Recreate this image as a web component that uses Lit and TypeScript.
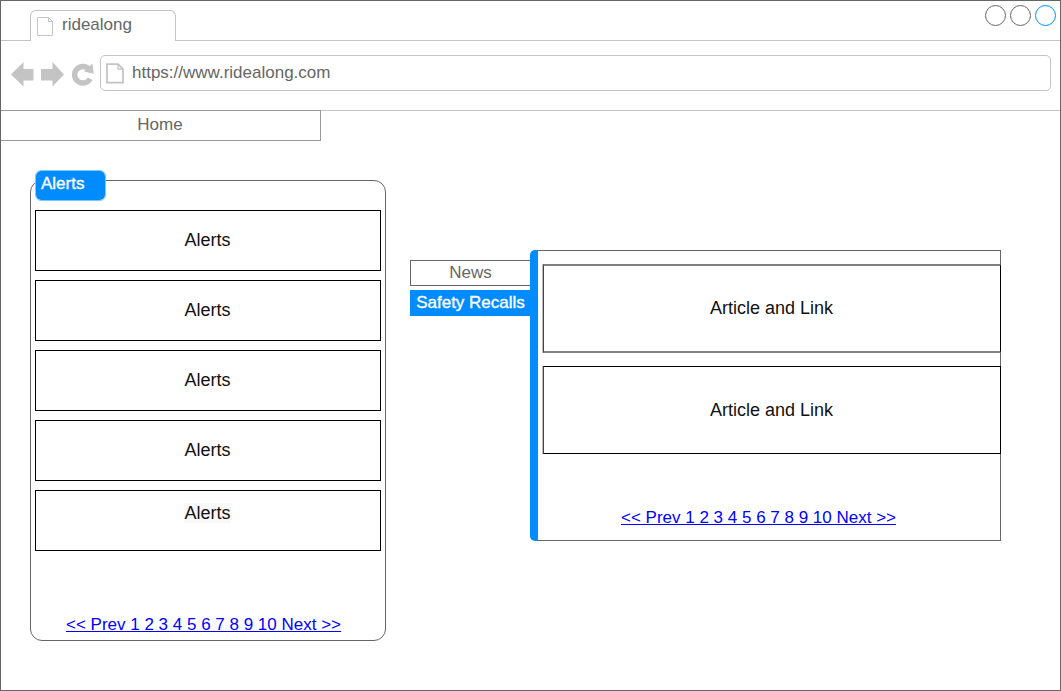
import { LitElement, html, css, svg } from "lit";
import { customElement, property } from "lit/decorators.js";

@customElement("page-links")
class PageLinks extends LitElement {
  static styles = css`
    :host { display: block; font-size: 17px; line-height: 20px; white-space: nowrap; }
    a { color: #0000ff; text-decoration: underline; text-decoration-thickness: 1px; text-underline-offset: 1px; text-decoration-skip-ink: none; }
  `;
  render() {
    return html`<a>&lt;&lt; Prev 1 2 3 4 5 6 7 8 9 10 Next &gt;&gt;</a>`;
  }
}

@customElement("browser-chrome")
class BrowserChrome extends LitElement {
  @property() name = "";
  @property() address = "";
  static styles = css`
    :host { display: block; color: #666; font-size: 17px; line-height: 20px; }
    svg { display: block; flex: none; }
    .tabs { display: flex; height: 40px; box-sizing: border-box; padding-top: 9px; border-bottom: 1px solid #c4c4c4; }
    .tab { box-sizing: border-box; width: 146px; height: 31px; margin-left: 29px; padding: 5px 0 0 6px; display: flex; background: #fff; border: 1px solid #c4c4c4; border-bottom: 0; border-radius: 6px 6px 0 0; }
    .tab span { margin: -1px 0 0 8px; }
    .controls { margin: -6px 3px 0 auto; }
    .bar { display: flex; height: 70px; box-sizing: border-box; padding: 14px 9px 0 10px; border-bottom: 1px solid #c4c4c4; }
    .url { box-sizing: border-box; flex: 1; height: 36px; display: flex; border: 1px solid #c4c4c4; border-radius: 5px; padding: 7px 0 0 5px; }
    .url span { margin-left: 8px; }
    .nav { margin-right: 4px; }
  `;
  render() {
    return html`
      <div class="tabs">
        <div class="tab">
          <svg width="17" height="20" fill="none" stroke="#c4c4c4"><path d="M.5 1.5H11.5L15.5 5.5V19.5H.5ZM11.5 1.5V5.5H15.5" /></svg>
          <span>${this.name}</span>
        </div>
        <svg class="controls" width="73" height="24" fill="none" stroke="#666">
          ${[["#666", 11.5], ["#666", 36.5], ["#008cff", 61.5]].map(([c, x]) => svg`<circle cx=${x} cy="11.5" r="10" stroke=${c} />`)}
        </svg>
      </div>
      <div class="bar">
        <svg class="nav" width="85" height="36" fill="#c4c4c4">
          <path d="M0 19.5L12.5 7V14H22.5V25.5H12.5V31.5ZM53 19.5L41.5 7V14H30V25.5H41.5V31.5Z" />
          <path d="M78.7 15A8.3 8.3 0 1 0 79.2 23.7" fill="none" stroke="#c4c4c4" stroke-width="5.4" />
          <path d="M81.4 8.6L82.8 18.8L73 16.6Z" />
        </svg>
        <div class="url">
          <svg width="18" height="22" fill="none" stroke="#c4c4c4" stroke-width="1.8"><path d="M1 1.2H12L17 6.2V19.7H1Z" /><path d="M12 1.2V6.2H17" stroke-width="1.2" /></svg>
          <span>${this.address}</span>
        </div>
      </div>
    `;
  }
}

@customElement("app-root")
class AppRoot extends LitElement {
  static styles = css`
    :host { display: block; }
    * { box-sizing: border-box; }
    .window { width: 1061px; height: 691px; border: 1px solid #666; background: #fff; font-family: "Liberation Sans", Arial, sans-serif; font-size: 17px; line-height: 20px; color: #666; overflow: hidden; }
    .home { width: 321px; height: 31px; margin: -1px 0 0 -1px; border: 1px solid #999; text-align: center; padding: 4px 1px 0 0; }
    .content { display: flex; align-items: flex-start; }
    .alerts { width: 356px; height: 461px; margin: 39px 0 0 29px; border: 1px solid #666; border-radius: 12px; padding: 0 4px; }
    .badge { width: 71px; height: 31px; margin-top: -11px; padding: 3px 5px 0; background: #008cff; background-clip: padding-box; border: 1px solid #80c6ff; border-radius: 6px; color: #fff; -webkit-text-stroke: .35px #fff; }
    .list { display: flex; flex-direction: column; gap: 9px; margin-top: 9px; }
    .card { height: 61px; border: 1px solid #000; display: flex; justify-content: center; align-items: center; font-size: 18px; color: #111; padding: 0 1px 1px 0; }
    .card.high { align-items: flex-start; padding-top: 12px; }
    .card.high span { background: #f9f9f9; }
    .alert-links { margin: 64px 0 0 31px; }
    .side { width: 120px; margin: 119px 0 0 24px; display: flex; flex-direction: column; gap: 4px; text-align: center; }
    .side div { height: 26px; padding-top: 2px; border: 1px solid #666; border-right: 0; }
    .side .on { background: #008cff; border: 0; color: #fff; -webkit-text-stroke: .35px #fff; padding: 3px 0 0 1px; white-space: nowrap; }
    .panel { width: 471px; height: 291px; margin-top: 109px; display: flex; }
    .rail { flex: none; width: 8px; background: #008cff; border-radius: 5px 0 0 5px; }
    .body { flex: 1; min-width: 0; border: 1px solid #666; border-left: 0; }
    .article { width: 458px; height: 88px; margin-left: 5px; border: 1px solid #000; border-left-color: #444; box-shadow: -1px 0 #bbb; display: flex; align-items: center; justify-content: center; font-size: 18px; color: #111; padding-right: 1px; }
    .article.first { height: 89px; margin-top: 13px; margin-bottom: 13px; padding-bottom: 2px; border-width: 2px 1px; border-top-color: #808080; border-bottom-color: #808080; }
    .panel-links { margin: 54px 0 0 83px; }
  `;
  render() {
    return html`
      <div class="window">
        <browser-chrome name="ridealong" address="https://www.ridealong.com"></browser-chrome>
        <div class="home">Home</div>
        <div class="content">
          <section class="alerts">
            <div class="badge">Alerts</div>
            <div class="list">
              ${[0, 1, 2, 3, 4].map((i) => html`<div class="card ${i === 4 ? "high" : ""}"><span>Alerts</span></div>`)}
            </div>
            <page-links class="alert-links"></page-links>
          </section>
          <nav class="side"><div>News</div><div class="on">Safety Recalls</div></nav>
          <section class="panel">
            <div class="rail"></div>
            <div class="body">
              <div class="article first">Article and Link</div>
              <div class="article">Article and Link</div>
              <page-links class="panel-links"></page-links>
            </div>
          </section>
        </div>
      </div>
    `;
  }
}
